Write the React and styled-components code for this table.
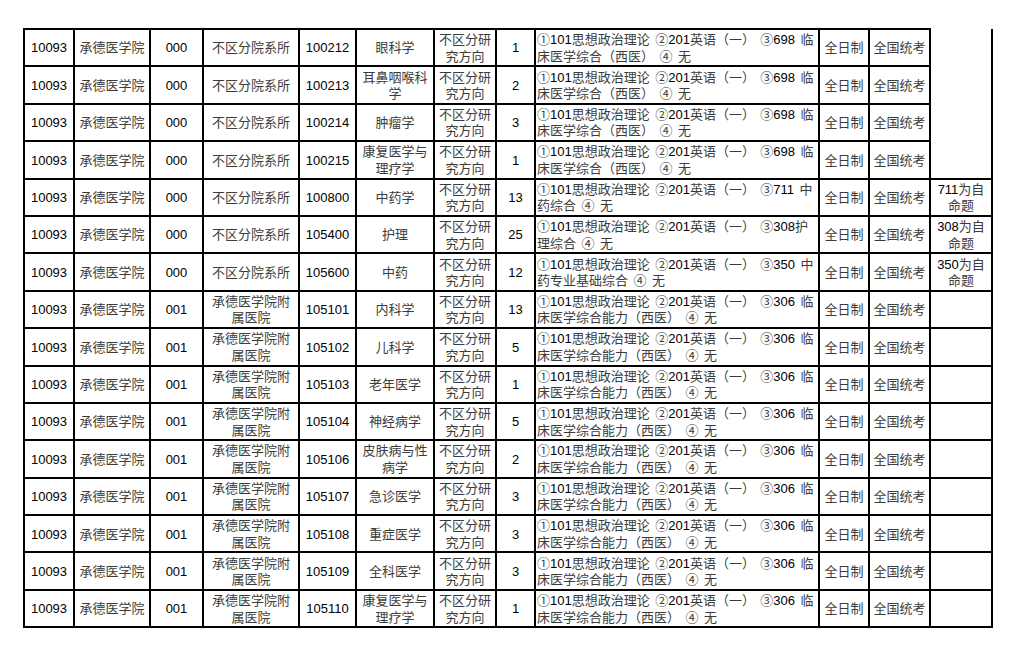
import styled, { createGlobalStyle } from 'styled-components'

const GlobalStyle = createGlobalStyle`
  html, body {
    margin: 0;
    padding: 0;
    background: #fff;
  }
`

const Page = styled.div`
  padding: 28px 0 0 23px;
  width: 1022px;
  height: 652px;
  box-sizing: border-box;
  overflow: hidden;
`

const Table = styled.table`
  border-collapse: collapse;
  table-layout: fixed;
  width: 970px;
  font-family: 'Liberation Sans', 'Noto Sans CJK SC', sans-serif;
  font-size: 13px;
  color: #000;
`

const Row = styled.tr`
  height: 37.4px;
`

const Cell = styled.td`
  border: 2px solid #000;
  padding: 2px 1px 0;
  line-height: 16.5px;
  vertical-align: middle;
  text-align: ${(p) => (p.$left ? 'left' : 'center')};
  word-spacing: ${(p) => (p.$left ? '1.8px' : '0')};
  white-space: pre;
  overflow: hidden;
`

const BlankCell = styled.td`
  border: 2px solid #000;
  border-top: none;
`

const Han = styled.span`
  color: #3c3c3c;
`

const widths = [50, 76, 53, 96, 57, 78, 62, 39, 284, 50, 61, 62]

const HAN = /[\u2460-\u24ff\u3000-\u9fff\uff00-\uffef]/
const withHan = (text) =>
  text
    .split(/([\u2460-\u24ff\u3000-\u9fff\uff00-\uffef]+)/)
    .filter(Boolean)
    .map((part, i) => (HAN.test(part) ? <Han key={i}>{part}</Han> : part))

const subj698 = '①101思想政治理论 ②201英语（一） ③698 临\n床医学综合（西医） ④ 无'
const subj306 = '①101思想政治理论 ②201英语（一） ③306 临\n床医学综合能力（西医） ④ 无'
const hospital = '承德医学院附\n属医院'

const rows = [
  ['000', '不区分院系所', '100212', '眼科学', '1', subj698, null],
  ['000', '不区分院系所', '100213', '耳鼻咽喉科\n学', '2', subj698, null],
  ['000', '不区分院系所', '100214', '肿瘤学', '3', subj698, null],
  ['000', '不区分院系所', '100215', '康复医学与\n理疗学', '1', subj698, null],
  ['000', '不区分院系所', '100800', '中药学', '13', '①101思想政治理论 ②201英语（一） ③711 中\n药综合 ④ 无', '711为自\n命题'],
  ['000', '不区分院系所', '105400', '护理', '25', '①101思想政治理论 ②201英语（一） ③308护\n理综合 ④ 无', '308为自\n命题'],
  ['000', '不区分院系所', '105600', '中药', '12', '①101思想政治理论 ②201英语（一） ③350 中\n药专业基础综合 ④ 无', '350为自\n命题'],
  ['001', hospital, '105101', '内科学', '13', subj306, ''],
  ['001', hospital, '105102', '儿科学', '5', subj306, ''],
  ['001', hospital, '105103', '老年医学', '1', subj306, ''],
  ['001', hospital, '105104', '神经病学', '5', subj306, ''],
  ['001', hospital, '105106', '皮肤病与性\n病学', '2', subj306, ''],
  ['001', hospital, '105107', '急诊医学', '3', subj306, ''],
  ['001', hospital, '105108', '重症医学', '3', subj306, ''],
  ['001', hospital, '105109', '全科医学', '3', subj306, ''],
  ['001', hospital, '105110', '康复医学与\n理疗学', '1', subj306, ''],
]

export default function App() {
  return (
    <Page>
      <GlobalStyle />
      <Table>
        <colgroup>
          {widths.map((w, i) => (
            <col key={i} style={{ width: w }} />
          ))}
        </colgroup>
        <tbody>
          {rows.map(([dept, deptName, code, major, count, subjects, note], i) => (
            <Row key={i}>
              <Cell>10093</Cell>
              <Cell>{withHan('承德医学院')}</Cell>
              <Cell>{dept}</Cell>
              <Cell>{withHan(deptName)}</Cell>
              <Cell>{code}</Cell>
              <Cell>{withHan(major)}</Cell>
              <Cell>{withHan('不区分研\n究方向')}</Cell>
              <Cell>{count}</Cell>
              <Cell $left>{withHan(subjects)}</Cell>
              <Cell>{withHan('全日制')}</Cell>
              <Cell>{withHan('全国统考')}</Cell>
              {i === 0 && <BlankCell rowSpan={4} />}
              {note !== null && <Cell>{withHan(note)}</Cell>}
            </Row>
          ))}
        </tbody>
      </Table>
    </Page>
  )
}
